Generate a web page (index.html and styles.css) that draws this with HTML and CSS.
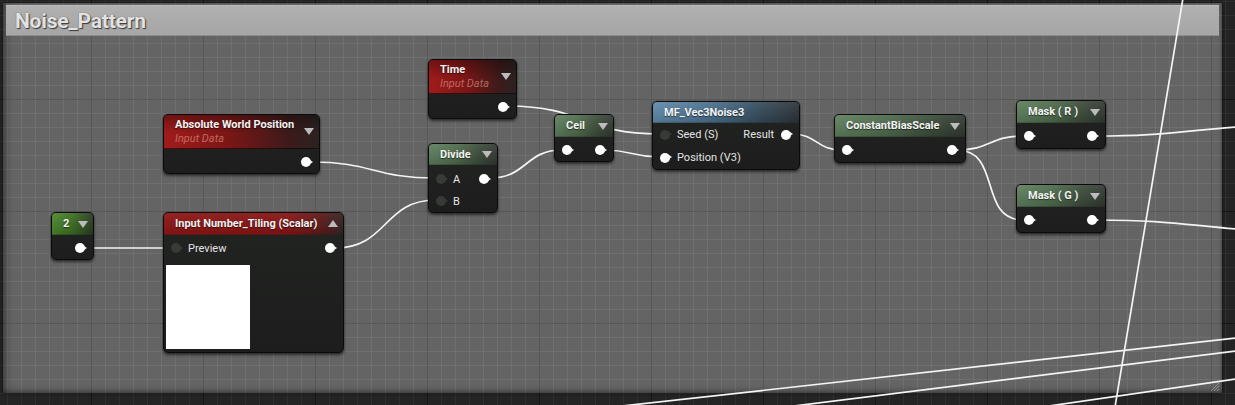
FILE: index.html
```html
<!DOCTYPE html>
<html>
<head>
<meta charset="utf-8">
<title>Noise_Pattern</title>
<link rel="stylesheet" href="styles.css">
</head>
<body>
<div class="graph">
  <div class="comment">
    <div class="comment-head">Noise_Pattern</div>
    <svg class="grip" width="12" height="12" viewBox="0 0 12 12">
      <path d="M11 3 L3 11 M11 6 L6 11 M11 9 L9 11" stroke="#8c8c8c" stroke-width="1" fill="none"/>
    </svg>
  </div>

  <svg class="wires" width="1235" height="405" viewBox="0 0 1235 405">
    <g fill="none" stroke="#f4f4f4" stroke-width="1.7" stroke-linecap="round">
      <path d="M84 248 L170 248"/>
      <path d="M311 162 C 373 162, 373 178, 436 178"/>
      <path d="M335 248 C 388 248, 383 200, 436 200"/>
      <path d="M507 106 C 585 106, 582 134, 660 134"/>
      <path d="M490 178 C 527 178, 525 150, 562 150"/>
      <path d="M604 150 C 632 150, 632 157, 660 157"/>
      <path d="M792 134 C 817 134, 816 150, 842 150"/>
      <path d="M957 150 C 990 150, 990 136, 1023 136"/>
      <path d="M957 150 C 1002 150, 978 220, 1023 220"/>
      <path d="M1096 136 C 1160 136, 1180 131, 1236 127"/>
      <path d="M1097 220 C 1160 220, 1180 224, 1236 229"/>
      <path d="M1183 -2 L1115 407"/>
      <path d="M622 406 L1236 338"/>
      <path d="M794 406 L1236 351"/>
      <path d="M1049 406 L1236 379"/>
    </g>
  </svg>

  <div class="node awp">
    <div class="head red tall">
      <div class="titles"><span class="title">Absolute World Position</span><span class="sub">Input Data</span></div>
      <span class="caret"></span>
    </div>
    <div class="body">
      <div class="row out"><span class="pin on"></span></div>
    </div>
  </div>

  <div class="node time">
    <div class="head red tall">
      <div class="titles"><span class="title">Time</span><span class="sub">Input Data</span></div>
      <span class="caret"></span>
    </div>
    <div class="body">
      <div class="row out"><span class="pin on"></span></div>
    </div>
  </div>

  <div class="node divide">
    <div class="head green">
      <span class="title">Divide</span>
      <span class="caret"></span>
    </div>
    <div class="body">
      <div class="row"><span class="in"><span class="pin off"></span><span class="label">A</span></span><span class="pin on"></span></div>
      <div class="row"><span class="in"><span class="pin off"></span><span class="label">B</span></span></div>
    </div>
  </div>

  <div class="node ceil">
    <div class="head green">
      <span class="title">Ceil</span>
      <span class="caret"></span>
    </div>
    <div class="body">
      <div class="row"><span class="pin on"></span><span class="pin on"></span></div>
    </div>
  </div>

  <div class="node mf">
    <div class="head blue">
      <span class="title">MF_Vec3Noise3</span>
    </div>
    <div class="body">
      <div class="row"><span class="in"><span class="pin off"></span><span class="label">Seed (S)</span></span><span class="outp"><span class="label">Result</span><span class="pin on"></span></span></div>
      <div class="row"><span class="in"><span class="pin on"></span><span class="label">Position (V3)</span></span></div>
    </div>
  </div>

  <div class="node cbs">
    <div class="head green">
      <span class="title">ConstantBiasScale</span>
      <span class="caret"></span>
    </div>
    <div class="body">
      <div class="row"><span class="pin on"></span><span class="pin on"></span></div>
    </div>
  </div>

  <div class="node mask-r">
    <div class="head green">
      <span class="title">Mask ( R )</span>
      <span class="caret"></span>
    </div>
    <div class="body">
      <div class="row"><span class="pin on"></span><span class="pin on"></span></div>
    </div>
  </div>

  <div class="node mask-g">
    <div class="head green">
      <span class="title">Mask ( G )</span>
      <span class="caret"></span>
    </div>
    <div class="body">
      <div class="row"><span class="pin on"></span><span class="pin on"></span></div>
    </div>
  </div>

  <div class="node two">
    <div class="head lime">
      <span class="title">2</span>
      <span class="caret"></span>
    </div>
    <div class="body">
      <div class="row out"><span class="pin on"></span></div>
    </div>
  </div>

  <div class="node tiling">
    <div class="head red flat">
      <span class="title">Input Number_Tiling (Scalar)</span>
      <span class="caret up"></span>
    </div>
    <div class="body">
      <div class="row"><span class="in"><span class="pin off"></span><span class="label">Preview</span></span><span class="pin on"></span></div>
      <div class="preview"></div>
    </div>
  </div>
</div>
</body>
</html>
```

FILE: styles.css
```css
html, body {
  margin: 0;
  padding: 0;
}

body {
  width: 1235px;
  height: 405px;
  overflow: hidden;
  font-family: Roboto, "Open Sans", "Liberation Sans", sans-serif;
  background-color: #242424;
  background-image:
    linear-gradient(to right, #171717 1px, transparent 1px),
    linear-gradient(to bottom, #171717 1px, transparent 1px),
    linear-gradient(to right, #2f2f2f 1px, transparent 1px),
    linear-gradient(to bottom, #2f2f2f 1px, transparent 1px);
  background-size: 112px 112px, 112px 112px, 14px 14px, 14px 14px;
  background-position: 91px 99px, 91px 99px, 7px 1px, 7px 1px;
}

.graph {
  position: relative;
  width: 1235px;
  height: 405px;
}

/* ---------- comment box ---------- */
.comment {
  position: absolute;
  left: 3px;
  top: 3px;
  width: 1219px;
  height: 390px;
  box-sizing: border-box;
  padding: 2px 3px 0 3px;
  background-color: #646464;
  background-image:
    linear-gradient(to right, #585858 1px, transparent 1px),
    linear-gradient(to bottom, #585858 1px, transparent 1px),
    linear-gradient(to right, #6f6f6f 1px, transparent 1px),
    linear-gradient(to bottom, #6f6f6f 1px, transparent 1px);
  background-size: 112px 112px, 112px 112px, 14px 14px, 14px 14px;
  background-position: 88px 96px, 88px 96px, 4px -2px, 4px -2px;
  box-shadow:
    inset 7px 0 8px -5px rgba(0, 0, 0, 0.45),
    inset 0 -5px 6px -4px rgba(0, 0, 0, 0.45),
    inset -3px 0 4px -3px rgba(0, 0, 0, 0.35),
    0 0 3px rgba(0, 0, 0, 0.7);
}

.comment-head {
  height: 31px;
  box-sizing: border-box;
  display: flex;
  align-items: center;
  padding: 1px 0 0 9px;
  background: linear-gradient(to bottom, #b0b0b0, #a6a6a6);
  border-top: 1px solid #bdbdbd;
  border-bottom: 1px solid #8e8e8e;
  font-size: 21px;
  font-weight: 700;
  color: #e2e2e2;
  text-shadow: 1px 1px 1px #383838, 0 0 1px #555;
  letter-spacing: -0.2px;
}

.grip {
  position: absolute;
  right: 2px;
  bottom: 1px;
}

/* ---------- wires ---------- */
.wires {
  position: absolute;
  left: 0;
  top: 0;
}

/* ---------- nodes ---------- */
.node {
  position: absolute;
  box-sizing: border-box;
  display: flex;
  flex-direction: column;
  background: linear-gradient(to bottom, #222422, #1c1d1c);
  border: 1px solid #0b0b0b;
  border-radius: 5px;
  box-shadow: 0 2px 3px rgba(0, 0, 0, 0.55), 0 0 1px rgba(0, 0, 0, 0.6);
}

.head {
  height: 22px;
  box-sizing: border-box;
  display: flex;
  align-items: center;
  justify-content: space-between;
  padding: 0 5px 0 11px;
  border-radius: 4px 4px 0 0;
  border-bottom: 1px solid rgba(0, 0, 0, 0.35);
}

.head.tall {
  height: 34px;
}

.titles {
  display: flex;
  flex-direction: column;
  padding-top: 1px;
}

.title {
  font-size: 11px;
  font-weight: 700;
  line-height: 13px;
  color: #f2f2f2;
  white-space: nowrap;
  text-shadow: 0 1px 1px rgba(0, 0, 0, 0.55);
}

.sub {
  font-size: 11px;
  font-style: italic;
  line-height: 15px;
  color: rgba(225, 165, 150, 0.6);
  white-space: nowrap;
}

.head.red {
  background:
    linear-gradient(to bottom, rgba(0, 0, 0, 0.3), rgba(0, 0, 0, 0) 55%),
    linear-gradient(to right, #a11b1b 0%, #7e1616 40%, #3d1a1a 80%, #2b2222 100%);
}

.head.red.flat {
  background:
    linear-gradient(to bottom, rgba(255, 255, 255, 0.06), rgba(0, 0, 0, 0.1)),
    linear-gradient(to right, #8e1515 0%, #861414 70%, #5a1a1a 88%, #352424 100%);
}

.head.green {
  background:
    linear-gradient(to bottom, rgba(255, 255, 255, 0.08), rgba(0, 0, 0, 0.12)),
    linear-gradient(to right, #5e7f5c 0%, #4d6a4b 40%, #3a4a39 75%, #313831 100%);
}

.head.lime {
  background:
    linear-gradient(to bottom, rgba(255, 255, 255, 0.06), rgba(0, 0, 0, 0.15)),
    linear-gradient(to right, #4d8a2d 0%, #3e7025 50%, #2b3d24 100%);
}

.head.blue {
  background:
    linear-gradient(to bottom, rgba(255, 255, 255, 0.08), rgba(0, 0, 0, 0.12)),
    linear-gradient(to right, #5f8aab 0%, #4a6f8c 40%, #33495a 75%, #2c3338 100%);
}

.caret {
  width: 0;
  height: 0;
  border-left: 5px solid transparent;
  border-right: 5px solid transparent;
  border-top: 7px solid #bcbcbc;
  margin-top: 1px;
}

.head.tall .caret {
  margin-top: 0;
}

.caret.up {
  border-top: 0;
  border-bottom: 7px solid #bcbcbc;
  margin-top: -1px;
}

.body {
  padding-top: 2px;
}

.row {
  height: 22px;
  display: flex;
  align-items: center;
  justify-content: space-between;
  padding: 0 8px 0 7px;
}

.row.out {
  justify-content: flex-end;
}

.in, .outp {
  display: flex;
  align-items: center;
  gap: 7px;
}

.label {
  font-size: 11px;
  color: #e4e4e4;
  white-space: nowrap;
}

.pin {
  position: relative;
  width: 10px;
  height: 10px;
  border-radius: 50%;
  flex: none;
}

.pin::after {
  content: "";
  position: absolute;
  left: 9px;
  top: 2.5px;
  border-left: 3px solid;
  border-top: 2.5px solid transparent;
  border-bottom: 2.5px solid transparent;
}

.pin.on {
  background: radial-gradient(circle at 40% 40%, #ffffff 55%, #e2e2e2 100%);
}

.pin.on::after {
  border-left-color: #f4f4f4;
}

.pin.off {
  background: #383a38;
}

.pin.off::after {
  border-left-color: #383a38;
}

.preview {
  width: 84px;
  height: 84px;
  margin: 6px 0 0 2px;
  background: #ffffff;
}

/* ---------- node placement on the graph canvas ---------- */
.awp    { left: 163px;  top: 114px; width: 157px; height: 60px; }
.time   { left: 428px;  top: 59px;  width: 89px;  height: 60px; }
.divide { left: 428px;  top: 143px; width: 70px;  height: 70px; }
.ceil   { left: 554px;  top: 114px; width: 60px;  height: 48px; }
.mf     { left: 652px;  top: 101px; width: 148px; height: 69px; }
.cbs    { left: 834px;  top: 114px; width: 132px; height: 49px; }
.mask-r { left: 1016px; top: 100px; width: 90px;  height: 49px; }
.mask-g { left: 1016px; top: 184px; width: 90px;  height: 49px; }
.two    { left: 51px;   top: 212px; width: 43px;  height: 48px; }
.tiling { left: 163px;  top: 212px; width: 181px; height: 141px; }

.divide .head { height: 21px; }
.divide .body { padding-top: 3px; }
.mf .head { height: 21px; }
.mf .body { padding-top: 0; }
.mf .row { height: 23px; }
.mf .head { padding-right: 8px; }
```
